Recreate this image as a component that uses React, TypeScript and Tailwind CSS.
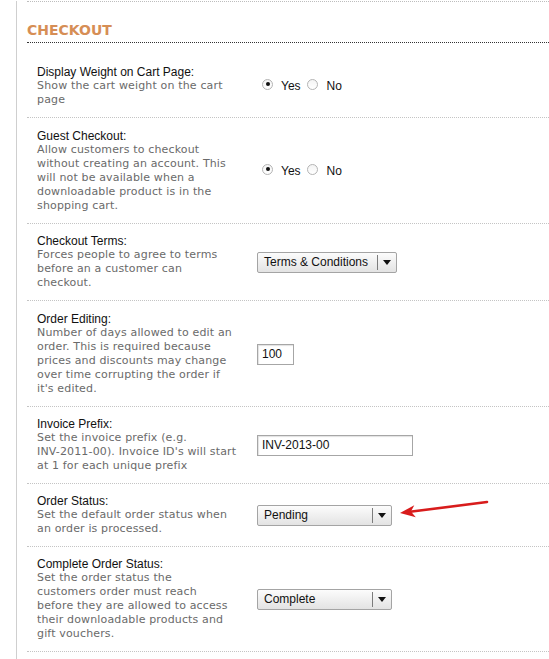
import React from 'react';

type Control =
  | { kind: 'radio'; value: boolean }
  | { kind: 'select'; value: string; width: string }
  | { kind: 'input'; value: string; width: string };

type Setting = {
  label: string;
  lines: string[];
  control: Control;
  pad: string;
};

const settings: Setting[] = [
  {
    label: 'Display Weight on Cart Page:',
    lines: ['Show the cart weight on the cart', 'page'],
    control: { kind: 'radio', value: true },
    pad: 'pt-[22px]',
  },
  {
    label: 'Guest Checkout:',
    lines: [
      'Allow customers to checkout',
      'without creating an account. This',
      'will not be available when a',
      'downloadable product is in the',
      'shopping cart.',
    ],
    control: { kind: 'radio', value: true },
    pad: 'pt-[11px]',
  },
  {
    label: 'Checkout Terms:',
    lines: ['Forces people to agree to terms', 'before an a customer can', 'checkout.'],
    control: { kind: 'select', value: 'Terms & Conditions', width: 'w-[140px]' },
    pad: 'pt-[10px]',
  },
  {
    label: 'Order Editing:',
    lines: [
      'Number of days allowed to edit an',
      'order. This is required because',
      'prices and discounts may change',
      'over time corrupting the order if',
      "it's edited.",
    ],
    control: { kind: 'input', value: '100', width: 'w-[37px]' },
    pad: 'pt-[11px]',
  },
  {
    label: 'Invoice Prefix:',
    lines: [
      'Set the invoice prefix (e.g.',
      "INV-2011-00). Invoice ID's will start",
      'at 1 for each unique prefix',
    ],
    control: { kind: 'input', value: 'INV-2013-00', width: 'w-[156px]' },
    pad: 'pt-[10px]',
  },
  {
    label: 'Order Status:',
    lines: ['Set the default order status when', 'an order is processed.'],
    control: { kind: 'select', value: 'Pending', width: 'w-[135px]' },
    pad: 'pt-[10px]',
  },
  {
    label: 'Complete Order Status:',
    lines: [
      'Set the order status the',
      'customers order must reach',
      'before they are allowed to access',
      'their downloadable products and',
      'gift vouchers.',
    ],
    control: { kind: 'select', value: 'Complete', width: 'w-[135px]' },
    pad: 'pt-[10px]',
  },
];

function Radio({ checked }: { checked: boolean }) {
  return (
    <span className="mb-[4px] flex h-[11px] w-[11px] items-center justify-center rounded-full border border-[#b4b4b4] bg-linear-to-b from-[#f4f4f4] to-white">
      {checked && <span className="h-[4px] w-[4px] rounded-full bg-[#111]" />}
    </span>
  );
}

function Select({ value, width }: { value: string; width: string }) {
  return (
    <div
      className={`flex h-[21px] ${width} rounded-[2px] border border-[#a4a4a4] bg-linear-to-b from-[#fcfcfc] to-[#e3e3e3]`}
    >
      <span className="flex-1 pl-[6px] text-[12px] leading-[19px] text-[#111]">{value}</span>
      <span className="my-[2px] w-px bg-[#7c7c7c]" />
      <span className="flex w-[18px] items-center justify-center">
        <svg width="8" height="5" viewBox="0 0 8 5">
          <polygon points="0,0 8,0 4,5" fill="#111" />
        </svg>
      </span>
    </div>
  );
}

function SettingControl({ control }: { control: Control }) {
  if (control.kind === 'radio') {
    return (
      <div className="flex items-center pl-[5px] text-[12px] leading-[14px] text-[#111]">
        <Radio checked={control.value} />
        <span className="ml-[8px]">Yes</span>
        <span className="ml-[6px]">
          <Radio checked={!control.value} />
        </span>
        <span className="ml-[9px]">No</span>
      </div>
    );
  }
  if (control.kind === 'select') {
    return <Select value={control.value} width={control.width} />;
  }
  return (
    <input
      type="text"
      readOnly
      defaultValue={control.value}
      className={`h-[21px] ${control.width} border border-[#a6a6a6] bg-white px-[4px] text-[12px] text-[#111] shadow-[inset_1px_1px_1px_rgba(0,0,0,0.12)] outline-none`}
    />
  );
}

export default function App() {
  return (
    <div className="relative h-[659px] w-full overflow-hidden bg-white font-['Liberation_Sans',Arial,sans-serif]">
      <div className="ml-4 h-full border-l border-[#cfcfcf] pl-[10px]">
        <div className="mt-px border-t border-dotted border-[#bdbdbd]" />

        <h2 className="mt-5 border-b border-dotted border-[#333] pb-1 font-['DejaVu_Sans',sans-serif] text-[14px] font-bold leading-[16px] text-[#d68e55]">
          CHECKOUT
        </h2>

        {settings.map((s) => (
          <div
            key={s.label}
            className={`flex items-center border-b border-dotted border-[#c4c4c4] pb-[10px] ${s.pad}`}
          >
            <div className="w-[230px] shrink-0 pl-[10px]">
              <div className="text-[12px] leading-[14px] text-[#111]">{s.label}</div>
              <div className="font-['DejaVu_Sans',sans-serif] text-[11px] leading-[14px] tracking-[0.15px] text-[#6a6a6a]">
                {s.lines.map((line) => (
                  <div key={line} className="whitespace-nowrap">
                    {line}
                  </div>
                ))}
              </div>
            </div>
            <SettingControl control={s.control} />
          </div>
        ))}
      </div>

      {/* red annotation arrow pointing at the order status select */}
      <svg
        className="absolute left-[395px] top-[495px]"
        width="100"
        height="30"
        viewBox="0 0 100 30"
      >
        <line x1="92" y1="7" x2="15" y2="16.8" stroke="#d81c1c" strokeWidth="2.6" strokeLinecap="round" />
        <path d="M5 18 L19.3 10.2 L15.9 16.6 L20.8 22.2 Z" fill="#d81c1c" />
      </svg>
    </div>
  );
}
